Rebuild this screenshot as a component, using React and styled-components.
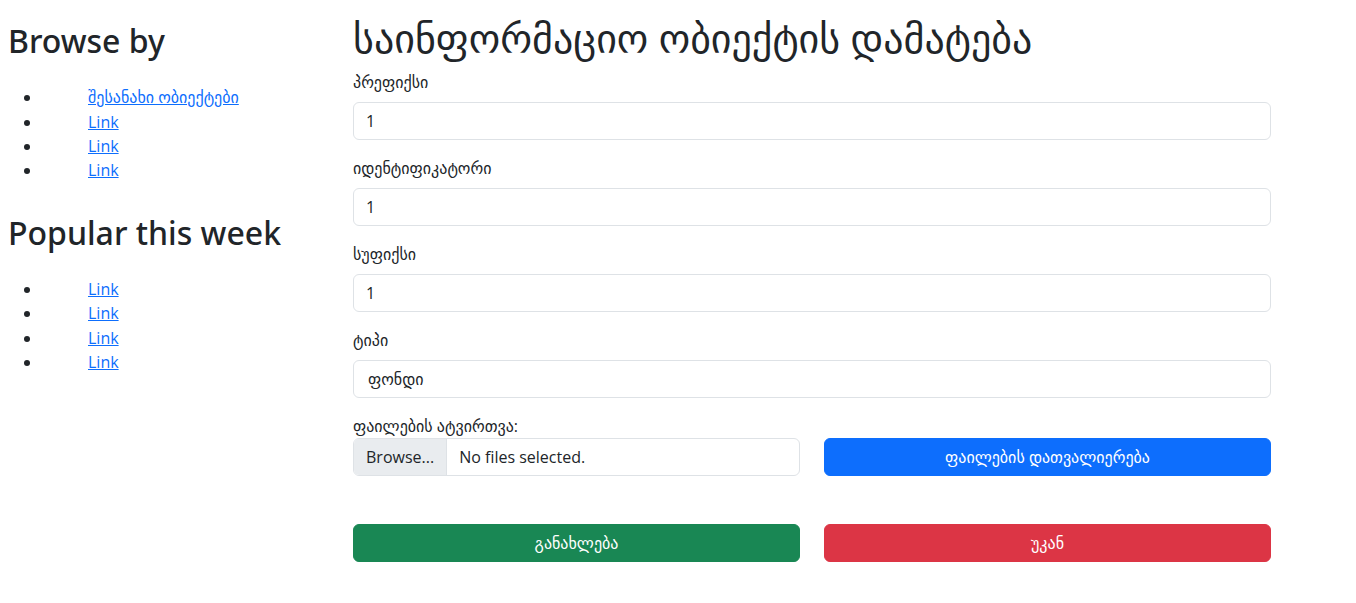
import styled, { createGlobalStyle } from 'styled-components'

const GlobalStyle = createGlobalStyle`
    * {
        box-sizing: border-box;
    }
    body {
        margin: 0;
        background-color: #fff;
        color: #212529;
        font-family: "Open Sans", "DejaVu Sans", sans-serif;
        font-size: 16px;
        line-height: 1.5;
    }
`

const Page = styled.div`
    display: grid;
    grid-template-columns: 345px 918px;
    padding: 0 8px;
`

const Sidebar = styled.aside`
    padding-top: 22px;
`

const SideTitle = styled.h2`
    margin: 0 0 25px;
    font-family: "Noto Sans", "Open Sans", sans-serif;
    font-size: 32px;
    font-weight: 500;
    line-height: 1.2;
`

const LinkList = styled.ul`
    margin: 0 0 31px;
    padding-left: 34px;
`

const LinkItem = styled.li`
    padding-left: 46px;
    line-height: 24.3px;
`

const SideLink = styled.a`
    color: #0d6efd;
    text-decoration: underline;
`

const Main = styled.main`
    padding-top: 14px;
`

const PageTitle = styled.h1`
    margin: 0 0 8px;
    font-size: 40px;
    font-weight: 500;
    line-height: 1.2;
`

const Field = styled.div`
    margin-bottom: 16px;
`

const Label = styled.label`
    display: block;
    margin-bottom: ${props => props.$tight ? '0' : '8px'};
`

const TextInput = styled.input`
    display: block;
    width: 100%;
    height: 38px;
    padding: 6px 12px;
    font: inherit;
    color: #212529;
    background: #fff;
    border: 1px solid #dee2e6;
    border-radius: 6px;
`

const Select = styled.select`
    display: block;
    width: 100%;
    height: 38px;
    padding: 6px 14px;
    font: inherit;
    color: #212529;
    background: #fff;
    border: 1px solid #dee2e6;
    border-radius: 6px;
    appearance: none;
`

const Row = styled.div`
    display: grid;
    grid-template-columns: 1fr 1fr;
    column-gap: 24px;
    margin-bottom: ${props => props.$gap || '0'};
`

const FileBox = styled.div`
    display: flex;
    height: 38px;
    border: 1px solid #dee2e6;
    border-radius: 6px;
    overflow: hidden;
`

const FileButton = styled.span`
    display: flex;
    align-items: center;
    padding: 0 12px;
    background: #e9ecef;
    border-right: 1px solid #dee2e6;
`

const FileName = styled.span`
    display: flex;
    align-items: center;
    padding: 0 12px;
`

const Button = styled.button`
    height: 38px;
    width: 100%;
    font: inherit;
    color: #fff;
    border: 1px solid ${props => props.$color};
    background: ${props => props.$color};
    border-radius: 6px;
`

const links = ['Link', 'Link', 'Link']

const App = () => {
    return (
        <>
            <GlobalStyle />
            <Page>
                <Sidebar>
                    <SideTitle>Browse by</SideTitle>
                    <LinkList>
                        <LinkItem><SideLink href="#">შესანახი ობიექტები</SideLink></LinkItem>
                        {links.map((l, i) => (
                            <LinkItem key={i}><SideLink href="#">{l}</SideLink></LinkItem>
                        ))}
                    </LinkList>
                    <SideTitle>Popular this week</SideTitle>
                    <LinkList>
                        {[...links, 'Link'].map((l, i) => (
                            <LinkItem key={i}><SideLink href="#">{l}</SideLink></LinkItem>
                        ))}
                    </LinkList>
                </Sidebar>

                <Main>
                    <PageTitle>საინფორმაციო ობიექტის დამატება</PageTitle>
                    <form>
                        <Field>
                            <Label>პრეფიქსი</Label>
                            <TextInput defaultValue="1" />
                        </Field>
                        <Field>
                            <Label>იდენტიფიკატორი</Label>
                            <TextInput defaultValue="1" />
                        </Field>
                        <Field>
                            <Label>სუფიქსი</Label>
                            <TextInput defaultValue="1" />
                        </Field>
                        <Field>
                            <Label>ტიპი</Label>
                            <Select defaultValue="fond">
                                <option value="fond">ფონდი</option>
                            </Select>
                        </Field>
                        <Label $tight>ფაილების ატვირთვა:</Label>
                        <Row $gap="48px">
                            <FileBox>
                                <FileButton>Browse...</FileButton>
                                <FileName>No files selected.</FileName>
                            </FileBox>
                            <Button type="button" $color="#0d6efd">ფაილების დათვალიერება</Button>
                        </Row>
                        <Row>
                            <Button type="submit" $color="#198754">განახლება</Button>
                            <Button type="button" $color="#dc3545">უკან</Button>
                        </Row>
                    </form>
                </Main>
            </Page>
        </>
    )
}

export default App
